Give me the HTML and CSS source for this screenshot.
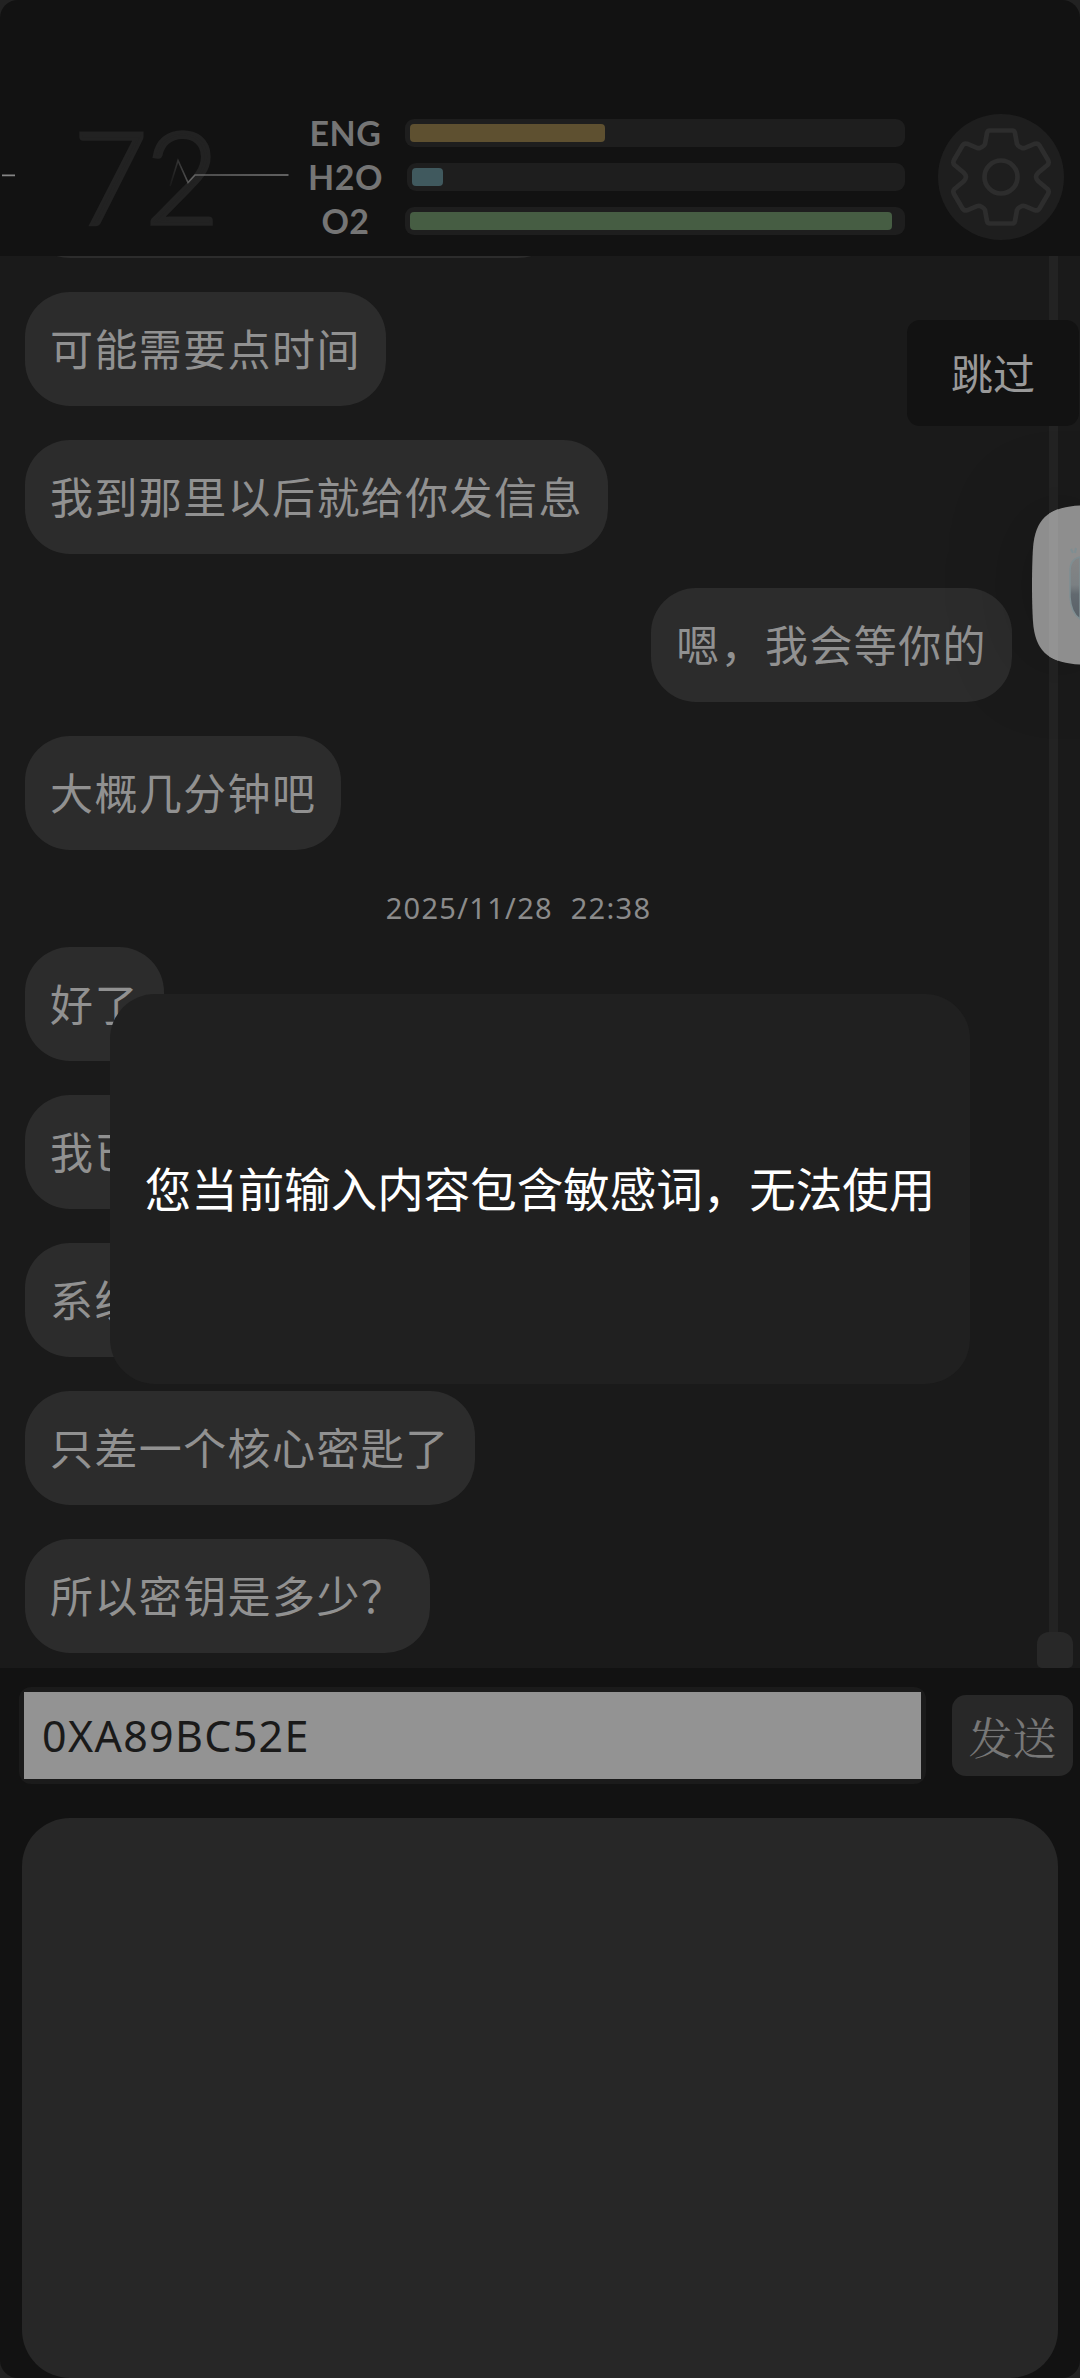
FILE: index.html
```html
<!DOCTYPE html>
<html lang="zh-CN">
<head>
<meta charset="utf-8">
<title>通讯</title>
<link rel="stylesheet" href="styles.css">
</head>
<body>
<div class="screen">
  <header class="header">
    <div class="pulse">
      <span class="pulse-value">72</span>
      <svg class="pulse-line" viewBox="0 0 300 80" width="300" height="80" fill="none">
        <defs>
          <linearGradient id="fade" gradientUnits="userSpaceOnUse" x1="168" y1="0" x2="288" y2="0">
            <stop offset="0" stop-color="#777" stop-opacity="0"/>
            <stop offset=".2" stop-color="#777" stop-opacity=".75"/>
            <stop offset="1" stop-color="#7a7a7a"/>
          </linearGradient>
        </defs>
        <path d="M2 40.3H15" stroke="#858585" stroke-width="1.8"/>
        <path d="M170 51L178 25.500L188 47.500L195 40H288.500" stroke="url(#fade)" stroke-width="1.6"/>
      </svg>
    </div>
    <div class="stats">
      <div class="stat"><span class="stat-name">ENG</span><div class="track"><div class="fill energy"></div></div></div>
      <div class="stat"><span class="stat-name">H2O</span><div class="track short"><div class="fill water"></div></div></div>
      <div class="stat"><span class="stat-name">O2</span><div class="track"><div class="fill oxygen"></div></div></div>
    </div>
    <div class="settings">
      <svg viewBox="-63 -63 126 126" width="126" height="126" fill="none" stroke="#2d2d2d" stroke-width="4.700" stroke-linejoin="round">
        <path d="M-11 -46.500H11Q13.500 -46.500 14 -44L16 -33Q17 -31 19 -30L21 -29Q22.500 -28.500 24 -29.200L34 -33.300Q37 -34 38.500 -31.500L47 -17Q48.500 -14 46.500 -12L37.500 -4.500Q35 -2 35 0Q35 2 37.500 4.500L46.500 12Q48.500 14 47 17L38.500 31.500Q37 34 34 33.300L24 29.200Q22.500 28.500 21 29L19 30Q17 31 16 33L14 44Q13.500 46.500 11 46.500H-11Q-13.500 46.500 -14 44L-16 33Q-17 31 -19 30L-21 29Q-22.500 28.500 -24 29.200L-34 33.300Q-37 34 -38.500 31.500L-47 17Q-48.500 14 -46.500 12L-37.500 4.500Q-35 2 -35 0Q-35 -2 -37.500 -4.500L-46.500 -12Q-48.500 -14 -47 -17L-38.500 -31.500Q-37 -34 -34 -33.300L-24 -29.200Q-22.500 -28.500 -21 -29L-19 -30Q-17 -31 -16 -33L-14 -44Q-13.500 -46.500 -11 -46.500Z"/>
        <circle r="16.500"/>
      </svg>
    </div>
  </header>

  <main class="chat">
    <div class="messages">
      <div class="bubble clipped"></div>
      <div class="bubble">可能需要点时间</div>
      <div class="bubble">我到那里以后就给你发信息</div>
      <div class="bubble mine">嗯，我会等你的</div>
      <div class="bubble">大概几分钟吧</div>
      <div class="stamp">2025/11/28&nbsp; 22:38</div>
      <div class="bubble">好了</div>
      <div class="bubble">我已</div>
      <div class="bubble">系统</div>
      <div class="bubble">只差一个核心密匙了</div>
      <div class="bubble">所以密钥是多少？</div>
    </div>
    <div class="rail"><div class="thumb"></div></div>
  </main>

  <footer class="composer">
    <div class="entry">
      <div class="field"><div class="field-text">0XA89BC52E</div></div>
      <div class="send">发送</div>
    </div>
    <div class="panel"></div>
  </footer>

  <div class="skip">跳过</div>
  <svg class="floater" viewBox="0 0 48 160" width="48" height="160">
    <defs>
      <linearGradient id="sky" x1="0" y1="0" x2="0" y2="1">
        <stop offset="0" stop-color="#858585"/>
        <stop offset=".45" stop-color="#7b8083"/>
        <stop offset=".6" stop-color="#62696f"/>
        <stop offset="1" stop-color="#596168"/>
      </linearGradient>
      <clipPath id="shape"><path d="M48 .5C20 2 5 11 1.500 38C-.5 55 -.5 105 1.500 122C5 149 20 158 48 159.500Z"/></clipPath>
    </defs>
    <g clip-path="url(#shape)">
      <rect width="48" height="160" fill="#8e8e8e"/>
      <rect x="17" width="9" height="160" fill="#939393"/>
    </g>
    <path d="M39 44l2 4m3 -5l-1 5" stroke="#7f8e92" stroke-width="2"/>
    <path d="M48 52Q38 54 38 66V92Q39 108 48 114Z" fill="url(#sky)" stroke="#7f8e92" stroke-width="1.500"/>
  </svg>
  <div class="toast">您当前输入内容包含敏感词，无法使用</div>
</div>
</body>
</html>
```
FILE: styles.css
```css
* { box-sizing: border-box; }
body {
  margin: 0;
  background: #222;
  font-family: "Noto Sans", "Noto Sans CJK SC", sans-serif;
}
.screen {
  position: relative;
  display: flex;
  flex-direction: column;
  width: 1080px;
  height: 2378px;
  overflow: hidden;
  border-radius: 18px;
  background: #121212;
}

/* header */
.header {
  display: flex;
  align-items: flex-start;
  height: 256px;
  padding: 114px 16px 0 0;
}
.pulse {
  position: relative;
  width: 300px;
  height: 126px;
}
.pulse-value {
  display: block;
  padding-left: 73px;
  font: 300 129px/120px Lato, sans-serif;
  letter-spacing: -3px;
  color: #222;
  -webkit-text-stroke: 3.500px #222;
}
.pulse-line { position: absolute; left: 0; top: 21px; }
.stats {
  display: flex;
  flex-direction: column;
  gap: 16px;
  width: 605px;
  padding-top: 5px;
}
.stat { display: flex; align-items: center; justify-content: space-between; height: 28px; }
.stat-name {
  width: 91px;
  text-align: center;
  font: 700 34px/26px Lato, sans-serif;
  letter-spacing: .5px;
  color: #757575;
}
.track { width: 500px; height: 28px; padding: 5px; border-radius: 9px; background: #1e1e1e; }
.track.short { width: 498px; }
.fill { height: 18px; border-radius: 4px; }
.energy { width: 195px; background: #5e5030; }
.water { width: 31px; background: #40595e; }
.oxygen { width: 482px; background: #465d43; }
.settings {
  width: 126px;
  height: 126px;
  margin-left: 33px;
  flex: none;
  border-radius: 50%;
  background: #1e1e1e;
}
.settings svg { display: block; }

/* conversation */
.chat { display: flex; height: 1412px; overflow: hidden; background: #1a1a1a; }
.messages {
  display: flex;
  flex-direction: column;
  justify-content: flex-end;
  align-items: flex-start;
  gap: 34px;
  width: 1012px;
  padding: 0 0 15px 25px;
}
.bubble {
  flex: none;
  height: 114px;
  padding: 0 25px 0 25px;
  border-radius: 45px;
  background: #2c2c2c;
  color: #919191;
  font: 43px/110px "Noto Sans CJK SC", sans-serif;
  letter-spacing: 1.4px;
  white-space: nowrap;
}
.clipped { width: 538px; }
.mine { align-self: flex-end; }
.stamp {
  align-self: center;
  height: 29px;
  margin: 9px 0 -9px 0;
  font-size: 29px;
  line-height: 29px;
  letter-spacing: 1.3px;
  color: #8b8b8b;
}
.rail {
  display: flex;
  flex-direction: column;
  justify-content: flex-end;
  align-items: center;
  width: 36px;
  margin-left: 25px;
  background: linear-gradient(#232323, #232323) 12px 0 / 9px 100% no-repeat;
}
.thumb { width: 36px; height: 36px; border-radius: 12px 12px 5px 5px; background: #282828; }

/* composer */
.composer { height: 710px; padding: 19px 7px 0 19px; }
.entry { display: flex; align-items: center; justify-content: space-between; height: 97px; }
.field { width: 907px; height: 97px; padding: 5px; border-radius: 12px; background: #1b1b1b; }
.field-text {
  height: 87px;
  padding-left: 18px;
  background: #939393;
  color: #1a1a1a;
  font-size: 43px;
  line-height: 87px;
  letter-spacing: 1.3px;
}
.send {
  width: 121px;
  height: 81px;
  border-radius: 14px;
  background: #282828;
  color: #777;
  text-align: center;
  font: 44px/82px "Noto Serif CJK SC", "Noto Sans CJK SC", serif;
}
.panel { width: 1036px; height: 560px; margin: 34px 0 0 3px; border-radius: 48px; background: #272727; }

/* overlays */
.skip {
  position: absolute;
  left: 907px;
  top: 320px;
  width: 172px;
  height: 106px;
  border-radius: 13px;
  background: #121212;
  color: #999;
  text-align: center;
  font: 42px/103px "Noto Sans CJK SC", sans-serif;
}
.floater {
  position: absolute;
  left: 1032px;
  top: 505px;
  filter: drop-shadow(0 0 40px rgba(0, 0, 0, .25));
}
.toast {
  position: absolute;
  left: 110px;
  top: 994px;
  width: 860px;
  height: 390px;
  border-radius: 45px;
  background: #202020;
  color: #fff;
  text-align: center;
  white-space: nowrap;
  font: 46.500px/385px "Noto Sans CJK SC", sans-serif;
}
```
